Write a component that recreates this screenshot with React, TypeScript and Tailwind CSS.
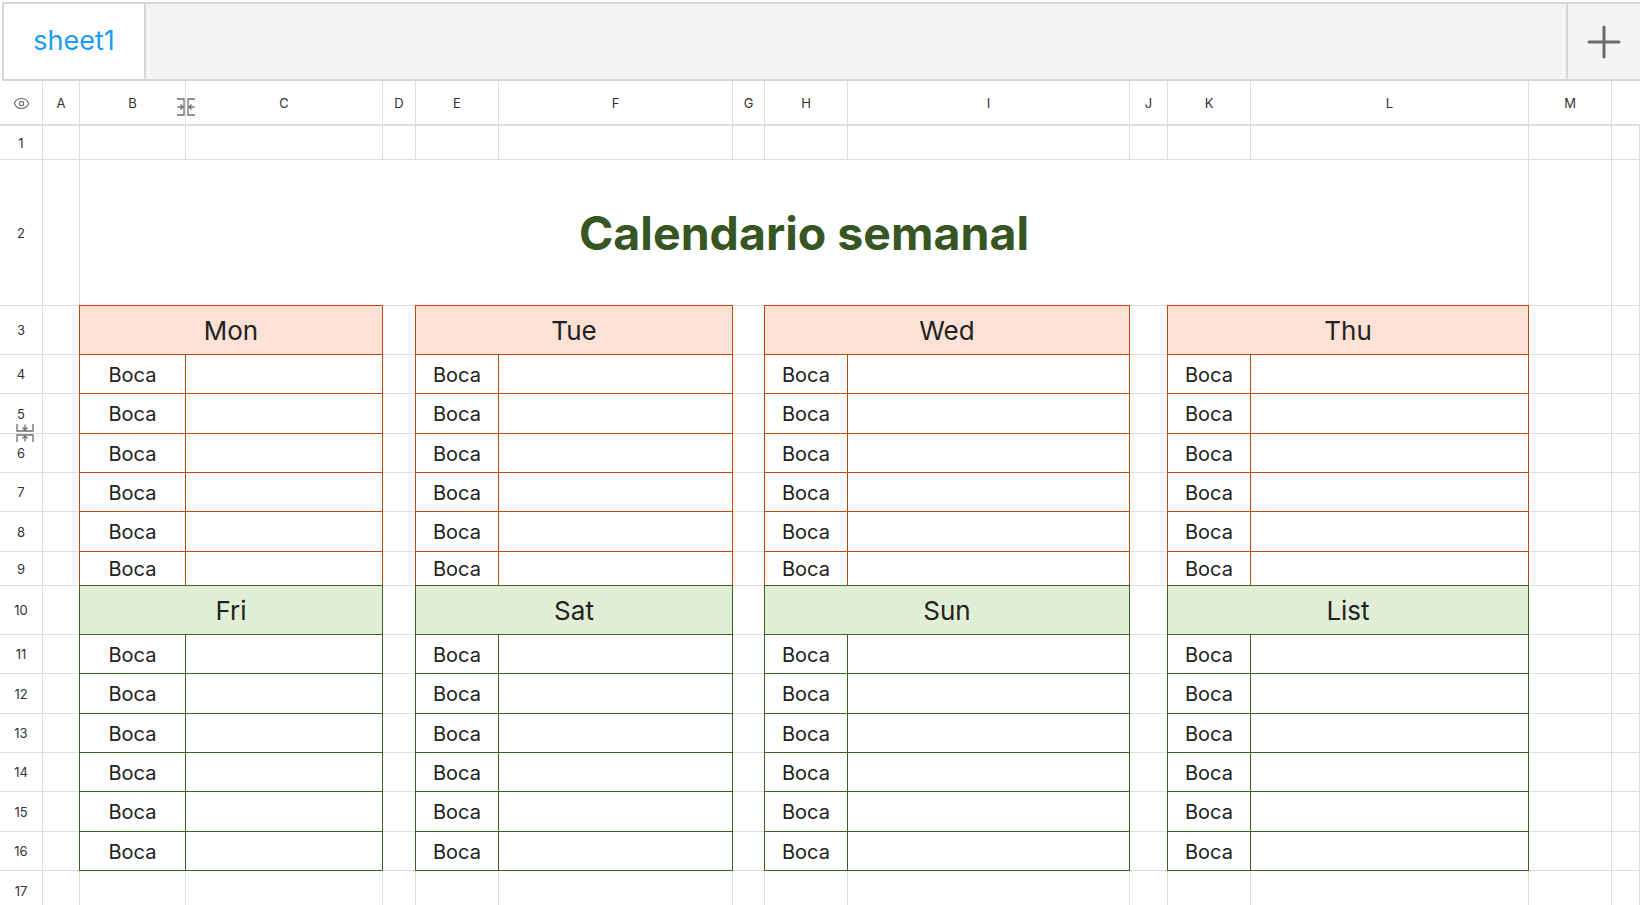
import { Eye } from 'lucide-react';

type Tone = 'orange' | 'green';

const LETTERS = ['A', 'B', 'C', 'D', 'E', 'F', 'G', 'H', 'I', 'J', 'K', 'L', 'M'];
const ORANGE_DAYS = ['Mon', 'Tue', 'Wed', 'Thu'];
const GREEN_DAYS = ['Fri', 'Sat', 'Sun', 'List'];

const plain = 'border-r border-b border-[#dedede]';

const tones: Record<Tone, { left: string; right: string; head: string }> = {
  orange: {
    left: '-ml-px flex items-center justify-center pt-px border-l border-r border-b border-[#b94a10] bg-white text-[20px] text-[#222]',
    right: 'border-r border-b border-[#b94a10] bg-white',
    head: '-ml-px -mt-px col-span-2 flex items-center justify-center pt-px border border-[#b94a10] bg-[#fde1d5] text-[26px] text-[#222]',
  },
  green: {
    left: '-ml-px flex items-center justify-center pt-px border-l border-r border-b border-[#40601f] bg-white text-[20px] text-[#222]',
    right: 'border-r border-b border-[#40601f] bg-white',
    head: '-ml-px -mt-px col-span-2 flex items-center justify-center pt-px border border-[#40601f] bg-[#e1eed6] text-[26px] text-[#222]',
  },
};

function ColResizeIcon() {
  return (
    <svg width="20" height="20" viewBox="0 0 20 20" fill="none" stroke="#6e6e6e" strokeWidth="1.3">
      <path d="M1 2h7v16H1" />
      <path d="M19 2h-7v16h7" />
      <path d="M1.5 10h5M4.5 7.5 7 10l-2.5 2.5" />
      <path d="M18.5 10h-5M15.5 7.5 13 10l2.5 2.5" />
    </svg>
  );
}

function RowResizeIcon() {
  return (
    <svg width="20" height="20" viewBox="0 0 20 20" fill="none" stroke="#6e6e6e" strokeWidth="1.3">
      <path d="M2 1v7h16V1" />
      <path d="M2 19v-7h16v7" />
      <path d="M10 1.5v5M7.5 4.5 10 7l2.5-2.5" />
      <path d="M10 18.5v-5M7.5 15.5 10 13l2.5 2.5" />
    </svg>
  );
}

function HeaderRow() {
  return (
    <>
      <div className="flex items-center justify-center border-r border-b-2 border-[#dedede] pt-[2px]">
        <Eye size={17} strokeWidth={1.6} color="#6b6b6b" />
      </div>
      {LETTERS.map((l) => (
        <div
          key={l}
          className="relative flex items-center justify-center border-r border-b-2 border-[#dedede] pt-[3px] text-[13px] text-[#333]"
        >
          {l}
          {l === 'B' && (
            <span className="absolute -right-[11px] top-[16px] flex">
              <ColResizeIcon />
            </span>
          )}
        </div>
      ))}
      <div className="border-b-2 border-[#dedede]" />
    </>
  );
}

function RowNumber({ n }: { n: number }) {
  return (
    <div className={`relative flex items-center justify-center pt-[2px] text-[13px] text-[#333] ${plain}`}>
      {n}
      {n === 5 && (
        <span className="absolute -bottom-[10px] left-[15px] z-10 flex">
          <RowResizeIcon />
        </span>
      )}
    </div>
  );
}

function TableRow({ n, tone, days }: { n: number; tone: Tone; days: string[] }) {
  const t = tones[tone];
  const isHead = n === 3 || n === 10;
  return (
    <>
      {days.map((d, i) => (
        <div key={d} className="contents">
          {isHead ? (
            <div className={t.head}>{d}</div>
          ) : (
            <>
              <div className={t.left}>Boca</div>
              <div className={t.right} />
            </>
          )}
          <div className={plain} />
          {i === 3 && <div className={plain} />}
        </div>
      ))}
    </>
  );
}

function SheetRow({ n }: { n: number }) {
  if (n === 2) {
    return (
      <>
        <RowNumber n={n} />
        <div className={plain} />
        <div className={`col-span-11 flex items-center justify-center bg-white pt-[2px] ${plain}`}>
          <span className="text-[46.5px] font-bold text-[#375623]">Calendario semanal</span>
        </div>
        <div className={plain} />
        <div className={plain} />
      </>
    );
  }
  if (n >= 3 && n <= 16) {
    return (
      <>
        <RowNumber n={n} />
        <div className={plain} />
        <TableRow n={n} tone={n <= 9 ? 'orange' : 'green'} days={n <= 9 ? ORANGE_DAYS : GREEN_DAYS} />
      </>
    );
  }
  return (
    <>
      <RowNumber n={n} />
      {Array.from({ length: 14 }).map((_, i) => (
        <div key={i} className={plain} />
      ))}
    </>
  );
}

export default function App() {
  const rows = Array.from({ length: 17 }, (_, i) => i + 1);
  return (
    <div className="h-[905px] w-[1640px] overflow-hidden bg-white font-['Inter','Liberation_Sans',sans-serif]">
      <div className="ml-[2px] mt-[2px] flex h-[79px] border-2 border-r-0 border-[#d6d6d6] bg-[#f4f4f4]">
        <div className="flex w-[142px] items-center justify-center border-r-2 border-[#d6d6d6] bg-white">
          <span className="text-[27px] text-[#1b9cf5]">sheet1</span>
        </div>
        <div className="flex-1" />
        <div className="flex w-[74px] items-center justify-center border-l-2 border-[#d6d6d6]">
          <svg width="34" height="34" viewBox="0 0 34 34" stroke="#6b6b6b" strokeWidth="3" strokeLinecap="round">
            <path d="M17 2v30M2 17h30" />
          </svg>
        </div>
      </div>

      <div className="grid grid-cols-[43px_37px_106px_197px_33px_83px_234px_32px_83px_282px_38px_83px_278px_83px_1fr] grid-rows-[45px_34px_146px_49px_39px_40px_39px_39px_40px_34px_49px_39px_40px_39px_39px_40px_39px_40px]">
        <HeaderRow />
        {rows.map((n) => (
          <SheetRow key={n} n={n} />
        ))}
      </div>
    </div>
  );
}
